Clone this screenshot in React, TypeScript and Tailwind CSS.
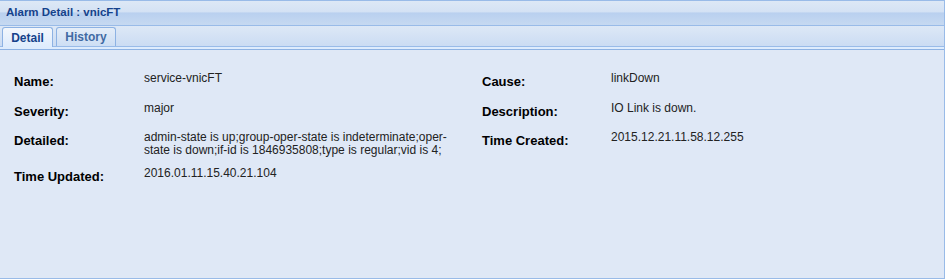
import React from 'react';

interface Field { label: string; value: string[] }

const left: Field[] = [
  { label: 'Name:', value: ['service-vnicFT'] },
  { label: 'Severity:', value: ['major'] },
  {
    label: 'Detailed:',
    value: [
      'admin-state is up;group-oper-state is indeterminate;oper-',
      'state is down;if-id is 1846935808;type is regular;vid is 4;',
    ],
  },
  { label: 'Time Updated:', value: ['2016.01.11.15.40.21.104'] },
];

const right: Field[] = [
  { label: 'Cause:', value: ['linkDown'] },
  { label: 'Description:', value: ['IO Link is down.'] },
  { label: 'Time Created:', value: ['2015.12.21.11.58.12.255'] },
];

const rowH = ['h-[30px]', 'h-[29px]', 'h-[36px]', 'h-[30px]'];

function Column({ fields, labelW }: { fields: Field[]; labelW: string }) {
  return (
    <div className="flex flex-col">
      {fields.map((f, i) => (
        <div key={f.label} className={`flex ${rowH[i]}`}>
          <div className={`${labelW} shrink-0 pt-[3px] text-[13px] leading-[14px] font-bold text-black`}>
            {f.label}
          </div>
          <div className="text-[12px] leading-[13px] text-[#222]">
            {f.value.map((line) => (
              <div key={line}>{line}</div>
            ))}
          </div>
        </div>
      ))}
    </div>
  );
}

export default function App() {
  return (
    <div
      className="w-[945px] h-[279px] flex flex-col border-t border-r border-b border-[#99bbe8] bg-[#dfe8f6]"
      style={{ fontFamily: 'Tahoma, "Liberation Sans", Arial, sans-serif' }}
    >
      {/* panel header */}
      <div className="h-[25px] shrink-0 border-b border-[#99bbe8] bg-[linear-gradient(to_bottom,#dde8f6_0%,#d4e2f4_45%,#b9d0ef_50%,#c6d9f1_100%)] pl-[6px] flex items-center">
        <span className="text-[11.5px] font-bold text-[#15428b]">Alarm Detail : vnicFT</span>
      </div>

      {/* tab strip */}
      <div className="h-[21px] shrink-0 bg-[linear-gradient(to_bottom,#dde8f6,#cbdcf3)] border-b border-[#99bbe8] flex items-end pl-[2px] gap-[3px]">
        <div className="h-[20px] w-[51px] -mb-px rounded-t-[3px] border border-b-0 border-[#8db2e3] bg-[linear-gradient(to_bottom,#f3f7fc,#deecfd)] flex items-center justify-center">
          <span className="text-[12px] font-bold text-[#15428b]">Detail</span>
        </div>
        <div className="h-[19px] w-[60px] rounded-t-[3px] border border-b-0 border-[#8db2e3] bg-[linear-gradient(to_bottom,#e4edf8,#cddef4)] flex items-center justify-center">
          <span className="text-[12px] font-bold text-[#416aa3]">History</span>
        </div>
      </div>
      <div className="h-[3px] shrink-0 bg-[#deecfd] border-b border-[#8db2e3]" />

      {/* body */}
      <div className="flex-1 pt-[22px] pl-[14px] flex">
        <div className="w-[468px]">
          <Column fields={left} labelW="w-[130px]" />
        </div>
        <div>
          <Column fields={right} labelW="w-[129px]" />
        </div>
      </div>
    </div>
  );
}
